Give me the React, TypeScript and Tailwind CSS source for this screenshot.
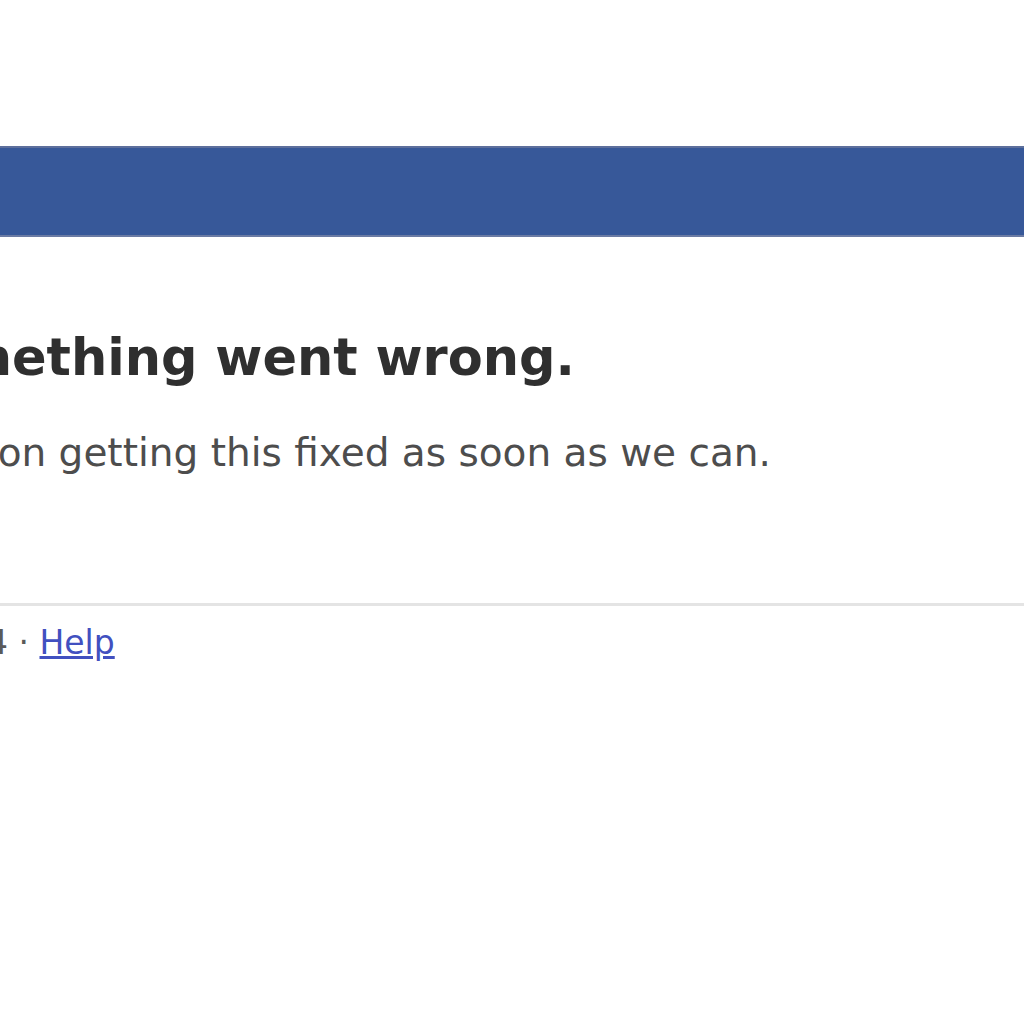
export default function App() {
  return (
    <div className="min-h-screen w-full overflow-hidden bg-white font-['DejaVu_Sans',sans-serif]">
      <div className="h-[146px]" />

      {/* Top blue bar */}
      <div className="h-[91px] border-t-2 border-b-2 border-t-[#5d6f9c] border-b-[#6b7ba4] bg-[#375899]" />

      <div className="whitespace-nowrap">
        <h1 className="ml-[-295px] mt-[95px] text-[51px] leading-none font-bold text-[#2f2f2f]">
          Sorry, something went wrong.
        </h1>
        <p className="ml-[-292px] mt-[50px] text-[39px] leading-none text-[#4d4d4d]">
          We&apos;re working on getting this fixed as soon as we can.
        </p>
      </div>

      <div className="mt-[131px] h-[3px] bg-[#e4e4e4]" />

      <div className="ml-[-285px] mt-[20px] whitespace-nowrap text-[33px] leading-none text-[#5a5a5a]">
        Facebook © 2014 · <a href="#" className="text-[#4150c0] underline">Help</a>
      </div>
    </div>
  );
}
